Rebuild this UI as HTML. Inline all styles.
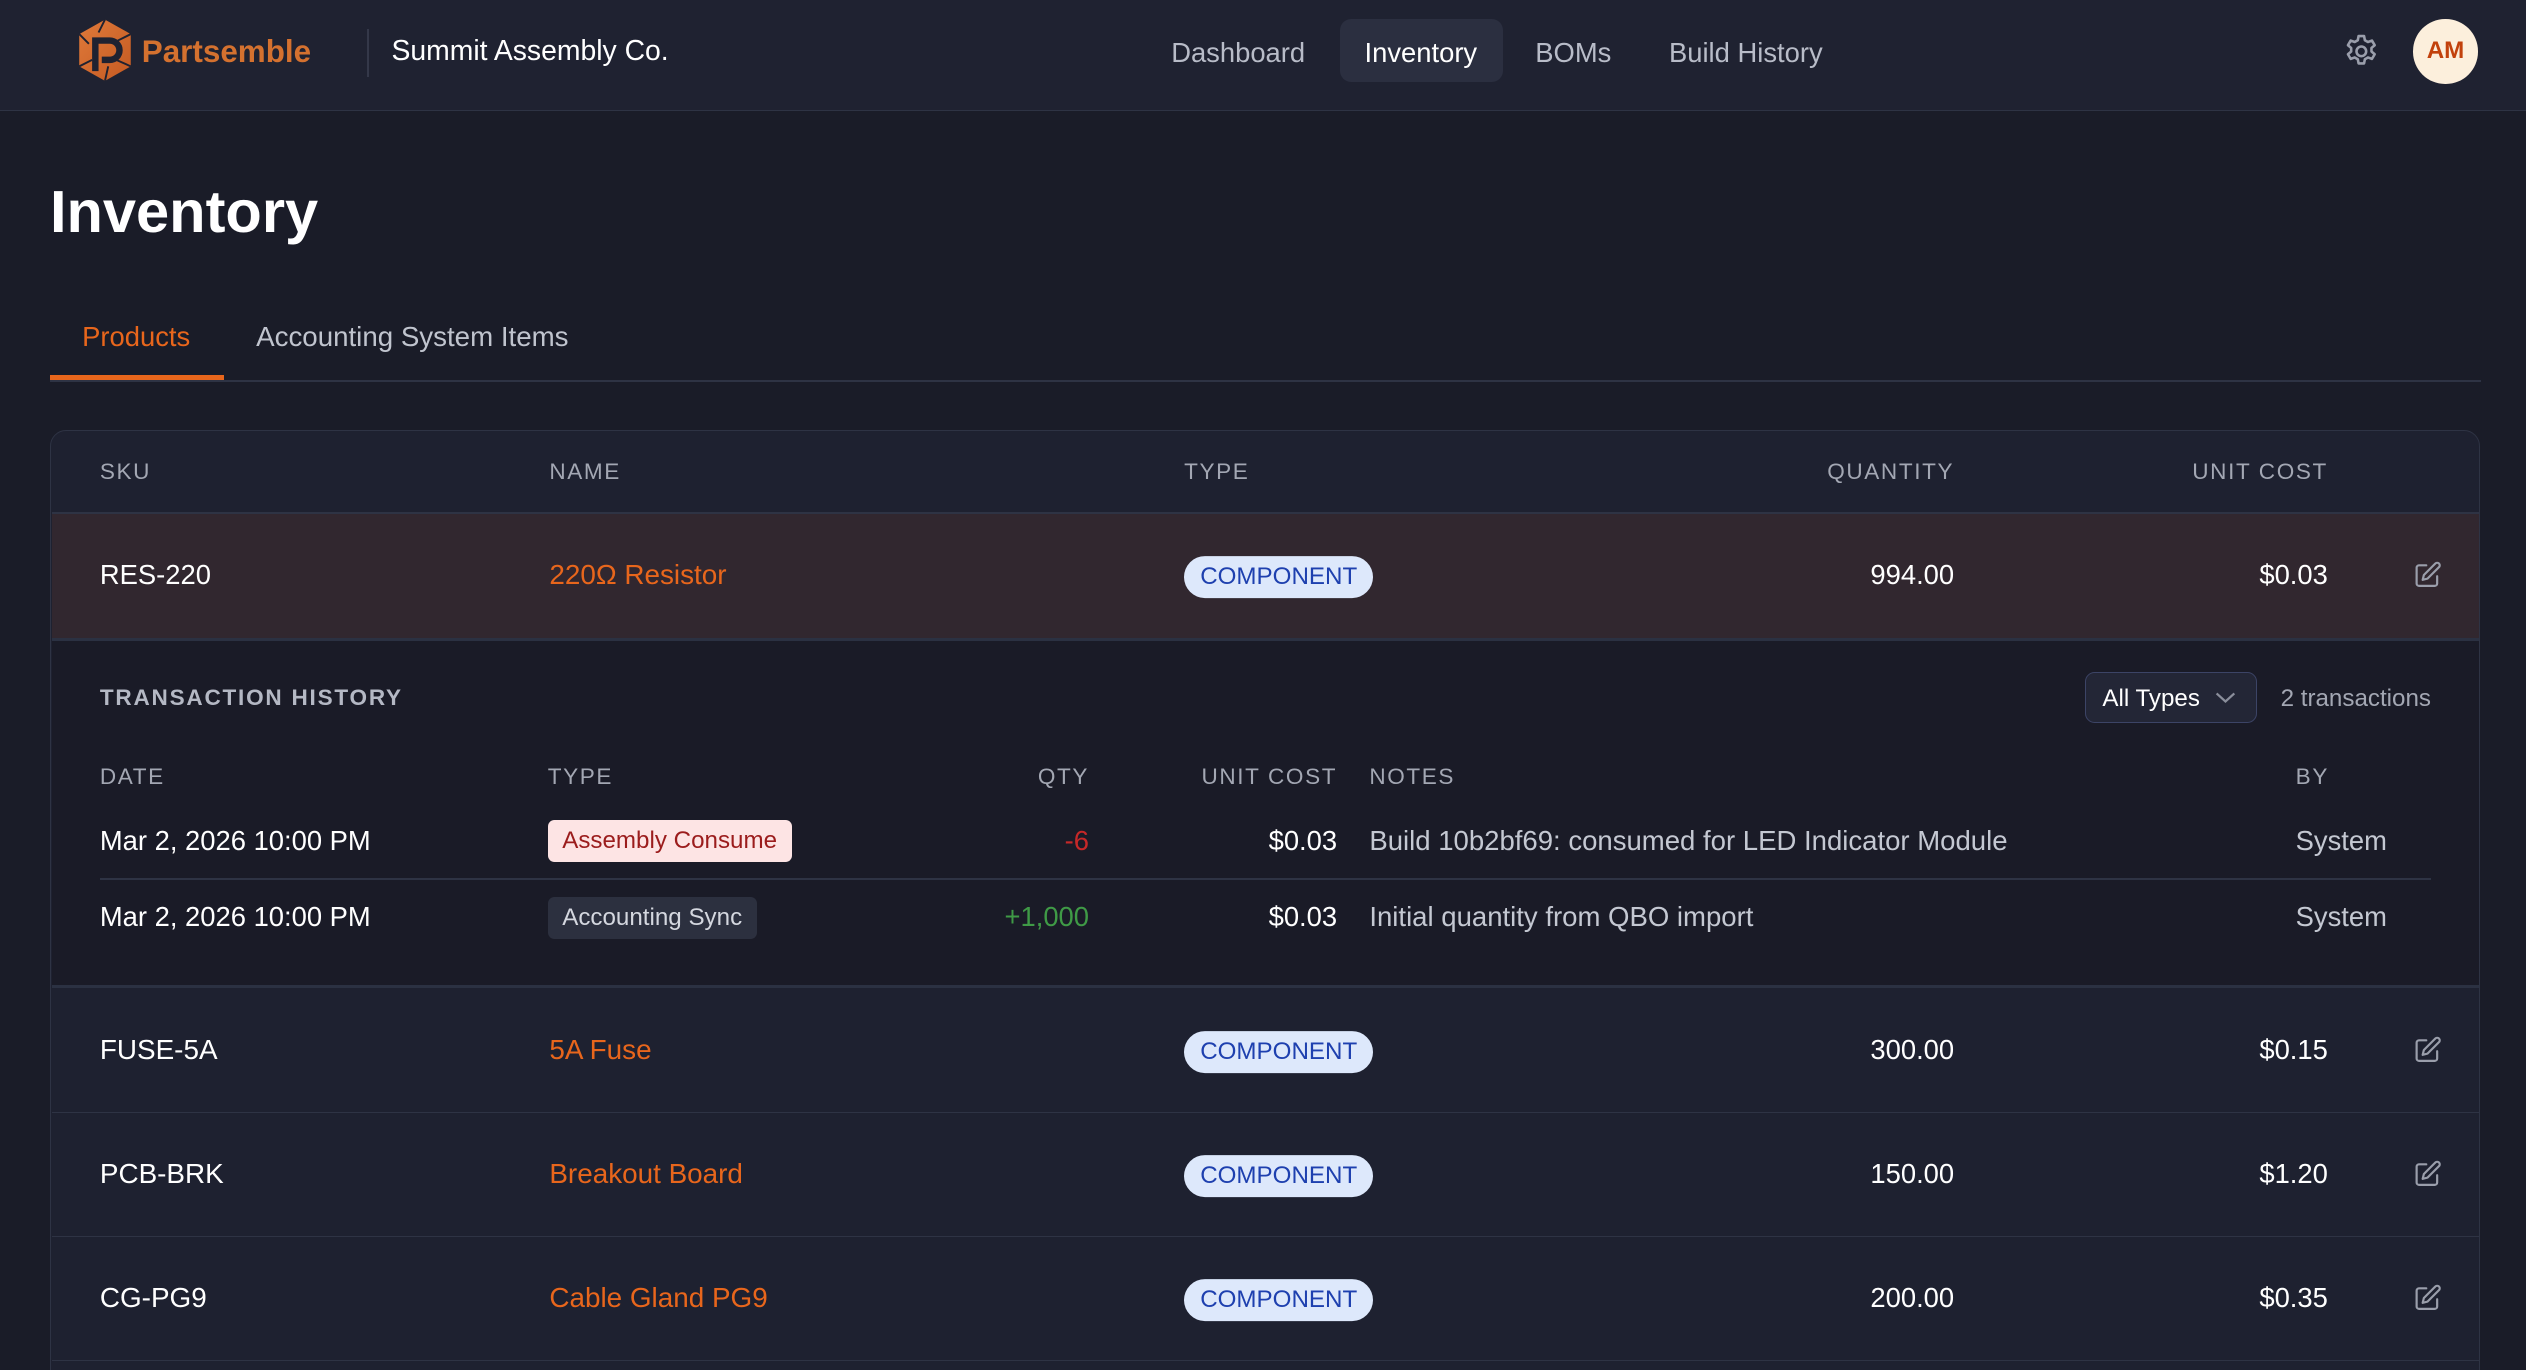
<!DOCTYPE html>
<html><head><meta charset="utf-8"><style>
html,body{margin:0;padding:0;background:#1a1c28;overflow:hidden}
body{width:2526px;height:1370px}
#r{zoom:1.611;position:relative;width:1568px;height:850px;font-family:"Liberation Sans",sans-serif;color:#fff}
.a{position:absolute;white-space:nowrap}
.hdr{position:absolute;left:0;top:0;width:1568px;height:68px;background:#1f2231;border-bottom:1px solid #2e3344}
.nav{font-size:17px;color:#b8bcc8;top:22px}
.th{font-size:14px;color:#a3a7b3;letter-spacing:1px}
.c{font-size:17px;transform:translateY(-50%)}
.badge{position:absolute;background:#dde8fb;color:#1e40af;font-size:15px;border-radius:13px;padding:0 10px;height:26px;line-height:26px;transform:translateY(-50%)}
.o{color:#e8661c}
.edit{position:absolute;left:1498px;width:18px;height:18px;transform:translateY(-50%)}
.r{text-align:right}
</style></head><body><div id="r">
<div class="hdr"></div>
<svg class="a" style="left:47px;top:11px" width="36" height="40" viewBox="0 0 36 40">
<defs><linearGradient id="g" x1="0" y1="0" x2="1" y2="1"><stop offset="0" stop-color="#e07a3a"/><stop offset="1" stop-color="#c45a22"/></linearGradient></defs>
<polygon points="18,1 34,10 34,30 18,39 2,30 2,10" fill="url(#g)"/>
<path d="M12,33 V14 H21 A6,6 0 0 1 21,26 H16" fill="none" stroke="#1f2231" stroke-width="4"/>
<path d="M18,1 L14,9 M34,10 L26,14 M34,30 L25,26 M18,39 L20,30 M2,30 L10,26 M2,10 L8,16" stroke="#1f2231" stroke-width="1.2"/>
</svg>
<div class="a" style="left:88px;top:21px;font-size:19.5px;font-weight:bold;color:#d4712f">Partsemble</div>
<div class="a" style="left:228px;top:18px;width:1px;height:30px;background:#343849"></div>
<div class="a" style="left:243px;top:22px;font-size:17.6px">Summit Assembly Co.</div>
<div class="a nav" style="left:727px;top:23px">Dashboard</div>
<div class="a" style="left:832px;top:12px;width:101px;height:39px;background:#2b2f40;border-radius:7px"></div>
<div class="a nav" style="left:847px;top:23px;color:#fff">Inventory</div>
<div class="a nav" style="left:953px;top:23px">BOMs</div>
<div class="a nav" style="left:1036px;top:23px">Build History</div>
<svg class="a" style="left:1454px;top:20px" width="24" height="24" viewBox="0 0 24 24" fill="none" stroke="#9a9eab" stroke-width="1.6"><path d="M10.3 2.5h3.4l.5 2.6 1.9 1.1 2.5-.9 1.7 2.9-2 1.7v2.2l2 1.7-1.7 2.9-2.5-.9-1.9 1.1-.5 2.6h-3.4l-.5-2.6-1.9-1.1-2.5.9-1.7-2.9 2-1.7v-2.2l-2-1.7 1.7-2.9 2.5.9 1.9-1.1z" stroke-linejoin="round"/><circle cx="12" cy="12" r="3"/></svg>
<div class="a" style="left:1498px;top:12px;width:40px;height:40px;border-radius:50%;background:#fcefdc;color:#c2410c;font-weight:bold;font-size:15px;text-align:center;line-height:40px">AM</div>

<div class="a" style="left:31px;top:110px;font-size:37px;font-weight:bold">Inventory</div>
<div class="a" style="left:51px;top:199px;font-size:17px;color:#e8661c">Products</div>
<div class="a" style="left:159px;top:199px;font-size:17.2px;color:#c0c4ce">Accounting System Items</div>
<div class="a" style="left:31px;top:236px;width:1509px;height:1px;background:#2e3344"></div>
<div class="a" style="left:31px;top:233px;width:108px;height:3px;background:#e8661c"></div>

<div class="a" style="left:31px;top:267px;width:1507px;height:600px;border:1px solid #2e3344;border-radius:10px;background:#1e2130"></div>
<div class="a" style="left:32px;top:318px;width:1507px;height:1px;background:#2e3344"></div>
<div class="a th" style="left:62px;top:285px">SKU</div>
<div class="a th" style="left:341px;top:285px">NAME</div>
<div class="a th" style="left:735px;top:285px">TYPE</div>
<div class="a th r" style="left:1013px;width:200px;top:285px">QUANTITY</div>
<div class="a th r" style="left:1245px;width:200px;top:285px">UNIT COST</div>

<div class="a" style="left:32px;top:319px;width:1507px;height:77px;background:#31272f"></div>
<div class="a" style="left:32px;top:396px;width:1507px;height:217px;background:#1a1b27;border-top:2px solid #2b3142;border-bottom:2px solid #2b3142;box-sizing:border-box"></div>
<div class="a" style="left:32px;top:690px;width:1507px;height:1px;background:#2e3344"></div>
<div class="a" style="left:32px;top:767px;width:1507px;height:1px;background:#2e3344"></div>
<div class="a" style="left:32px;top:844px;width:1507px;height:1px;background:#2e3344"></div>

<div class="a c" style="left:62px;top:357px">RES-220</div>
<div class="a c o" style="left:341px;top:357px;font-size:17.3px">220Ω Resistor</div>
<div class="badge" style="left:735px;top:358px">COMPONENT</div>
<div class="a c r" style="left:1013px;width:200px;top:357px">994.00</div>
<div class="a c r" style="left:1245px;width:200px;top:357px">$0.03</div>

<div class="a c" style="left:62px;top:652px;font-size:17.3px">FUSE-5A</div>
<div class="a c o" style="left:341px;top:652px;font-size:17.3px">5A Fuse</div>
<div class="badge" style="left:735px;top:653px">COMPONENT</div>
<div class="a c r" style="left:1013px;width:200px;top:652px">300.00</div>
<div class="a c r" style="left:1245px;width:200px;top:652px">$0.15</div>

<div class="a c" style="left:62px;top:729px;font-size:17.3px">PCB-BRK</div>
<div class="a c o" style="left:341px;top:729px;font-size:17.3px">Breakout Board</div>
<div class="badge" style="left:735px;top:730px">COMPONENT</div>
<div class="a c r" style="left:1013px;width:200px;top:729px">150.00</div>
<div class="a c r" style="left:1245px;width:200px;top:729px">$1.20</div>

<div class="a c" style="left:62px;top:806px;font-size:17.3px">CG-PG9</div>
<div class="a c o" style="left:341px;top:806px;font-size:17.3px">Cable Gland PG9</div>
<div class="badge" style="left:735px;top:807px">COMPONENT</div>
<div class="a c r" style="left:1013px;width:200px;top:806px">200.00</div>
<div class="a c r" style="left:1245px;width:200px;top:806px">$0.35</div>

<svg class="edit" style="top:357px" viewBox="0 0 24 24" fill="none" stroke="#9a9eab" stroke-width="1.8" stroke-linecap="round" stroke-linejoin="round"><path d="M11 4H5a2 2 0 0 0-2 2v13a2 2 0 0 0 2 2h13a2 2 0 0 0 2-2v-6"/><path d="M18.5 2.5a2.1 2.1 0 0 1 3 3L12 15l-4 1 1-4z"/></svg>
<svg class="edit" style="top:652px" viewBox="0 0 24 24" fill="none" stroke="#9a9eab" stroke-width="1.8" stroke-linecap="round" stroke-linejoin="round"><path d="M11 4H5a2 2 0 0 0-2 2v13a2 2 0 0 0 2 2h13a2 2 0 0 0 2-2v-6"/><path d="M18.5 2.5a2.1 2.1 0 0 1 3 3L12 15l-4 1 1-4z"/></svg>
<svg class="edit" style="top:729px" viewBox="0 0 24 24" fill="none" stroke="#9a9eab" stroke-width="1.8" stroke-linecap="round" stroke-linejoin="round"><path d="M11 4H5a2 2 0 0 0-2 2v13a2 2 0 0 0 2 2h13a2 2 0 0 0 2-2v-6"/><path d="M18.5 2.5a2.1 2.1 0 0 1 3 3L12 15l-4 1 1-4z"/></svg>
<svg class="edit" style="top:806px" viewBox="0 0 24 24" fill="none" stroke="#9a9eab" stroke-width="1.8" stroke-linecap="round" stroke-linejoin="round"><path d="M11 4H5a2 2 0 0 0-2 2v13a2 2 0 0 0 2 2h13a2 2 0 0 0 2-2v-6"/><path d="M18.5 2.5a2.1 2.1 0 0 1 3 3L12 15l-4 1 1-4z"/></svg>

<div class="a" style="left:62px;top:425px;font-size:14px;font-weight:bold;letter-spacing:1.1px;color:#b4b8c4">TRANSACTION HISTORY</div>
<div class="a" style="left:1294px;top:417px;width:107px;height:32px;border:1px solid #3c4466;border-radius:6px;background:#232636;box-sizing:border-box"></div>
<div class="a" style="left:1305px;top:425px;font-size:15px">All Types</div>
<svg class="a" style="left:1375px;top:429px" width="13" height="9" viewBox="0 0 13 9"><path d="M1 1.5l5.5 5 5.5-5" fill="none" stroke="#8a8e9b" stroke-width="1.4"/></svg>
<div class="a r" style="left:1309px;width:200px;top:425px;font-size:15px;color:#a3a7b3">2 transactions</div>

<div class="a th" style="left:62px;top:474px">DATE</div>
<div class="a th" style="left:340px;top:474px">TYPE</div>
<div class="a th r" style="left:576px;width:100px;top:474px">QTY</div>
<div class="a th r" style="left:700px;width:130px;top:474px">UNIT COST</div>
<div class="a th" style="left:850px;top:474px">NOTES</div>
<div class="a th" style="left:1425px;top:474px">BY</div>

<div class="a c" style="left:62px;top:522px">Mar 2, 2026 10:00 PM</div>
<div class="a" style="left:340px;top:509px;height:26px;line-height:26px;padding:0 9px;background:#fde4e4;color:#9b1c1c;font-size:15px;border-radius:4px">Assembly Consume</div>
<div class="a c r" style="left:576px;width:100px;top:522px;color:#c62828">-6</div>
<div class="a c r" style="left:700px;width:130px;top:522px">$0.03</div>
<div class="a c" style="left:850px;top:522px;color:#c4c8d2;font-size:17.1px">Build 10b2bf69: consumed for LED Indicator Module</div>
<div class="a c" style="left:1425px;top:522px;color:#c4c8d2">System</div>
<div class="a" style="left:62px;top:545px;width:1447px;height:1px;background:#2e3344"></div>

<div class="a c" style="left:62px;top:569px">Mar 2, 2026 10:00 PM</div>
<div class="a" style="left:340px;top:557px;height:26px;line-height:26px;padding:0 9px;background:#2c303f;color:#d4d7df;font-size:15px;border-radius:4px">Accounting Sync</div>
<div class="a c r" style="left:576px;width:100px;top:569px;color:#3f9a46">+1,000</div>
<div class="a c r" style="left:700px;width:130px;top:569px">$0.03</div>
<div class="a c" style="left:850px;top:569px;color:#c4c8d2;font-size:17.1px">Initial quantity from QBO import</div>
<div class="a c" style="left:1425px;top:569px;color:#c4c8d2">System</div>
</div></body></html>
